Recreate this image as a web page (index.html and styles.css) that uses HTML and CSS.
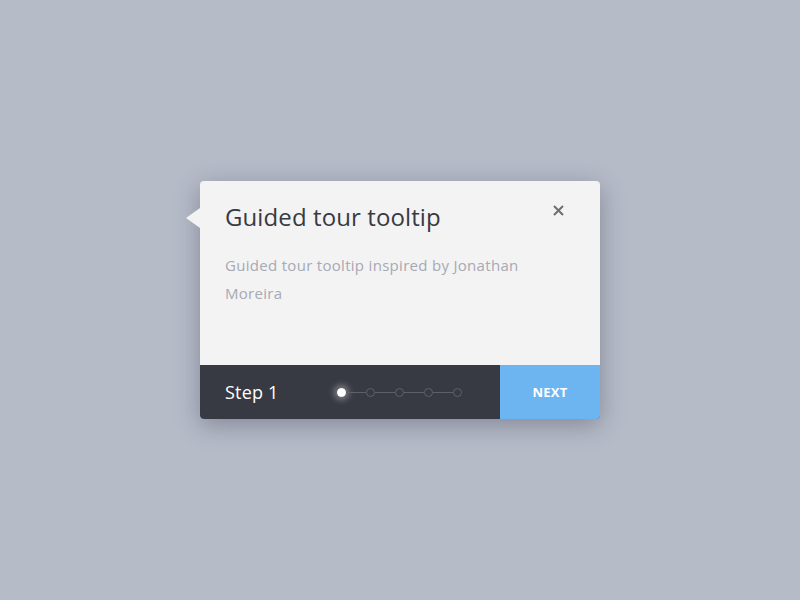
FILE: index.html
```html
<!DOCTYPE html>
<html>
<head>
<meta charset="utf-8">
<link rel="stylesheet" href="styles.css">
</head>
<body>
<div class="stage">
  <div class="tooltip">
    <div class="arrow"></div>
    <div class="content">
      <div class="head">
        <h1 class="title">Guided tour tooltip</h1>
        <button class="close" aria-label="Close">
          <svg width="11" height="11" viewBox="0 0 11 11"><path d="M1 1L10 10M10 1L1 10" stroke="#6b6d75" stroke-width="2" stroke-linecap="butt"/></svg>
        </button>
      </div>
      <p class="desc">Guided tour tooltip inspired by Jonathan Moreira</p>
    </div>
    <div class="footer">
      <div class="step">Step 1</div>
      <div class="dots">
        <span class="dot active"></span>
        <span class="line"></span>
        <span class="dot"></span>
        <span class="line"></span>
        <span class="dot"></span>
        <span class="line"></span>
        <span class="dot"></span>
        <span class="line"></span>
        <span class="dot"></span>
      </div>
      <button class="next">NEXT</button>
    </div>
  </div>
</div>
</body>
</html>
```
FILE: styles.css
```css
html, body {
  margin: 0;
  padding: 0;
  height: 100%;
}
body {
  background: #b6bbc8;
  font-family: "Open Sans", "Lato", sans-serif;
}
.stage {
  height: 600px;
  display: flex;
  align-items: flex-start;
  justify-content: center;
  padding-top: 181px;
  box-sizing: border-box;
}
.tooltip {
  position: relative;
  width: 400px;
  height: 238px;
  background: #f3f3f3;
  border-radius: 4px;
  box-shadow: 0 6px 24px rgba(40, 44, 60, 0.35);
  display: flex;
  flex-direction: column;
}
.arrow {
  position: absolute;
  left: -14px;
  top: 27px;
  width: 0;
  height: 0;
  border-top: 10px solid transparent;
  border-bottom: 10px solid transparent;
  border-right: 14px solid #f3f3f3;
}
.content {
  flex: 1;
  padding: 20px 25px 0 25px;
}
.head {
  display: flex;
  justify-content: space-between;
  align-items: flex-start;
}
.title {
  margin: 0;
  font-size: 24px;
  font-weight: 400;
  color: #383a43;
  line-height: 32px;
  letter-spacing: 0.1px;
}
.close {
  border: 0;
  background: none;
  padding: 0;
  margin: 2px 9px 0 0;
  width: 15px;
  height: 15px;
  display: flex;
  align-items: center;
  justify-content: center;
  cursor: pointer;
}
.desc {
  margin: 18px 0 0 0;
  font-size: 15px;
  line-height: 28px;
  color: #a7a9b3;
  letter-spacing: 0.3px;
  width: 320px;
}
.footer {
  height: 54px;
  display: flex;
  align-items: center;
  background: #383a43;
  border-radius: 0 0 4px 4px;
  overflow: hidden;
}
.step {
  padding-left: 25px;
  width: 112px;
  color: #ffffff;
  font-size: 18px;
  letter-spacing: 0.2px;
}
.dots {
  display: flex;
  align-items: center;
  flex: 1;
}
.dot {
  width: 7px;
  height: 7px;
  border-radius: 50%;
  border: 1px solid #5d606a;
  box-sizing: content-box;
}
.dot.active {
  width: 7px;
  height: 7px;
  background: #ffffff;
  border-color: #ffffff;
  box-shadow: 0 0 6px 3px rgba(255, 255, 255, 0.35);
}
.line {
  width: 20px;
  height: 1px;
  background: #5d606a;
}
.next {
  width: 100px;
  height: 54px;
  border: 0;
  background: #6cb5f0;
  color: #ffffff;
  font-family: "Open Sans", sans-serif;
  font-weight: 700;
  font-size: 13px;
  letter-spacing: 0.3px;
  cursor: pointer;
}
```
